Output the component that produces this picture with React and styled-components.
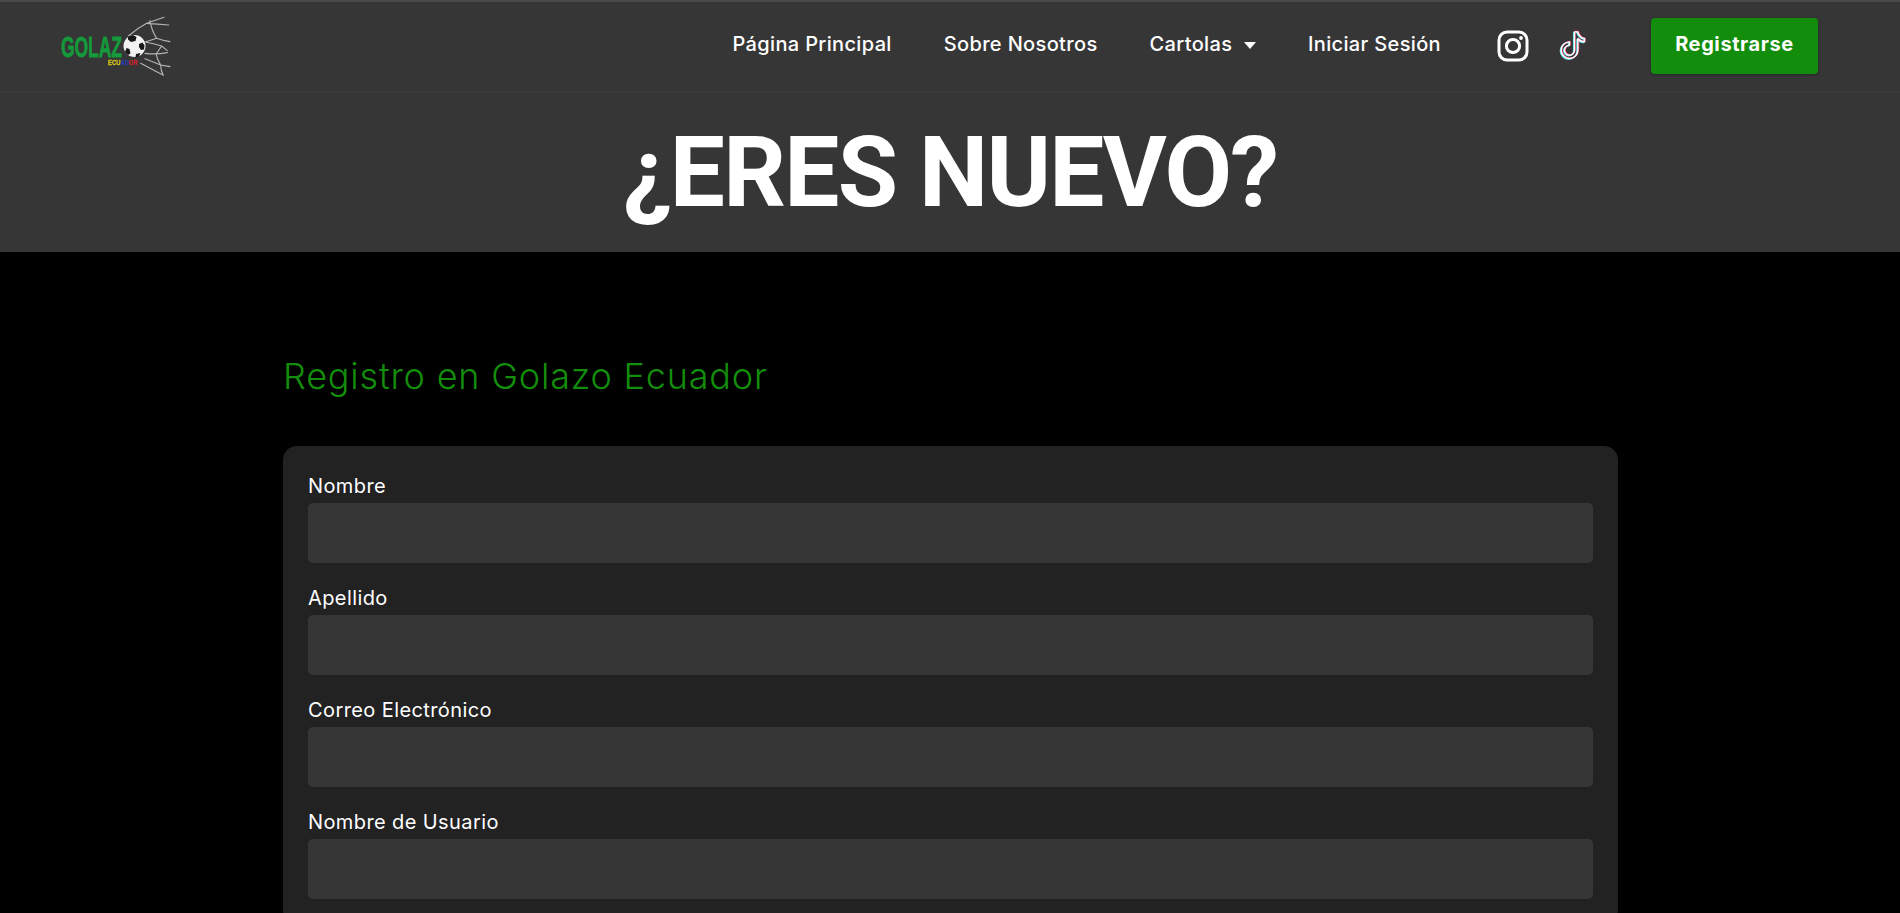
import React from "react";
import styled, { createGlobalStyle } from "styled-components";

const fields = ["Nombre", "Apellido", "Correo Electrónico", "Nombre de Usuario"];
const links = ["Página Principal", "Sobre Nosotros"];

const Logo = () => (
  <LogoSvg width="120" height="72" viewBox="0 0 120 72" fill="none">
    <g transform="translate(-2 -1) scale(0.3333)" stroke="#b4b4b4" strokeWidth="3.4" strokeLinecap="round">
      <path d="M235 78 Q262 55 290 40 L342 22 M290 40 Q322 42 356 45 M300 32 Q304 60 320 85 Q338 92 360 95 M320 85 Q300 92 285 96 M285 96 Q312 100 335 108 L352 122 M335 108 Q326 122 318 132 M285 130 Q318 134 352 128 M318 132 Q322 150 332 165 L360 170 M285 146 Q306 154 332 165 M332 165 Q332 182 340 196 M272 160 Q306 178 340 196" />
    </g>
    <circle cx="82.500" cy="35" r="11" fill="#f2f2f2" />
    <path d="M76 25.500l5-1.500 3.500 2-1 4-4.500 1-3-2.500zM87 33l3.500-1.500 2 3-.5 4-3 .5-2-3zM74.500 37l3 1 1 4.500-2.500 1.500-3-3zM84 43l4.500-1-1.500 3.500-3.500 1z" fill="#191919" />
    <LogoWord x="9" y="46" fontSize="29" fill="#169a3c" stroke="#169a3c" strokeWidth="0.9" textLength="61" lengthAdjust="spacingAndGlyphs">
      GOLAZ
    </LogoWord>
    <LogoWord x="56" y="54" fontSize="8" strokeWidth="0.3" textLength="30" lengthAdjust="spacingAndGlyphs">
      <tspan fill="#d8c81c" stroke="#d8c81c">ECU</tspan>
      <tspan fill="#2a3cb0" stroke="#2a3cb0">AD</tspan>
      <tspan fill="#cf2530" stroke="#cf2530">OR</tspan>
    </LogoWord>
  </LogoSvg>
);

const Instagram = () => (
  <svg width="32" height="32" viewBox="0 0 32 32" fill="none" stroke="#fff">
    <rect x="2" y="2" width="28" height="28" rx="8" strokeWidth="3" />
    <circle cx="16" cy="16" r="6.600" strokeWidth="3" />
    <circle cx="24" cy="8" r="1.900" fill="#fff" stroke="none" />
  </svg>
);

const tiktokPath =
  "M9 0h1.980c.144.715.540 1.617 1.235 2.512C12.895 3.389 13.797 4 15 4v2c-1.753 0-3.070-.814-4-1.829V11a5 5 0 1 1-5-5v2a3 3 0 1 0 3 3V0Z";

const Tiktok = () => (
  <svg width="30" height="32" viewBox="-1.500 -1 18 19" strokeWidth="0.850" strokeLinejoin="round" fill="none">
    <path d={tiktokPath} stroke="#62e6ee" transform="translate(-0.500 0.400)" />
    <path d={tiktokPath} stroke="#f0446a" transform="translate(0.350 -0.200)" />
    <path d={tiktokPath} stroke="#fff" />
  </svg>
);

export default function App() {
  return (
    <>
      <GlobalStyle />
      <Page>
        <TopBand>
          <Navbar>
            <Logo />
            <NavLinks>
              {links.map((l) => (
                <NavLink key={l}>{l}</NavLink>
              ))}
              <NavLink>
                Cartolas <Caret />
              </NavLink>
              <NavLink>Iniciar Sesión</NavLink>
              <Socials>
                <Instagram />
                <Tiktok />
              </Socials>
              <RegisterButton>Registrarse</RegisterButton>
            </NavLinks>
          </Navbar>
          <Hero>
            <HeroTitle>¿ERES NUEVO?</HeroTitle>
          </Hero>
        </TopBand>
        <Main>
          <SectionTitle>Registro en Golazo Ecuador</SectionTitle>
          <Card>
            {fields.map((f) => (
              <Field key={f}>
                <Label>{f}</Label>
                <Input aria-label={f} />
              </Field>
            ))}
          </Card>
        </Main>
      </Page>
    </>
  );
}

const GlobalStyle = createGlobalStyle`
  html, body {
    margin: 0;
    background: #000;
    font-family: "Inter", "Liberation Sans", sans-serif;
  }
`;

const Page = styled.div`
  height: 913px;
  overflow: hidden;
  background: #000;
`;

const TopBand = styled.div`
  background: #363636;
  border-top: 2px solid #4a4a4a;
`;

const Navbar = styled.nav`
  height: 90px;
  padding: 0 82px 0 52px;
  display: flex;
  align-items: center;
  justify-content: space-between;
  border-bottom: 1px solid #3c3c3c;
`;

const LogoSvg = styled.svg`
  filter: blur(0.4px);
`;

const LogoWord = styled.text`
  font-family: "Liberation Sans", sans-serif;
  font-weight: 700;
`;

const NavLinks = styled.div`
  display: flex;
  align-items: center;
  gap: 52px;
  margin-bottom: 2px;
`;

const NavLink = styled.a`
  padding-bottom: 4px;
  color: #fff;
  font-size: 20px;
  font-weight: 500;
  letter-spacing: 0.35px;
  white-space: nowrap;
`;

const Caret = styled.span`
  display: inline-block;
  margin-left: 6px;
  vertical-align: middle;
  border-left: 6.5px solid transparent;
  border-right: 6.5px solid transparent;
  border-top: 7px solid #fff;
`;

const Socials = styled.div`
  display: flex;
  align-items: center;
  gap: 28px;
  margin-left: 4px;
`;

const RegisterButton = styled.button`
  width: 167px;
  height: 56px;
  margin-left: 12px;
  padding: 0 0 4px;
  border: 0;
  border-radius: 4px;
  background: #138e0c;
  color: #fff;
  font-family: inherit;
  font-size: 20px;
  font-weight: 700;
  letter-spacing: 0.6px;
  box-shadow: 0 1px 3px rgba(0, 0, 0, 0.3);
`;

const Hero = styled.header`
  height: 159px;
  display: flex;
  align-items: center;
  justify-content: center;
`;

const HeroTitle = styled.h1`
  margin: 0;
  color: #fff;
  font-family: "Roboto", "Liberation Sans", sans-serif;
  font-size: 98px;
  font-weight: 700;
  letter-spacing: -1.7px;
  line-height: 1;
  white-space: nowrap;
`;

const Main = styled.main`
  padding: 0 282px 0 283px;
`;

const SectionTitle = styled.h2`
  margin: 0;
  padding: 102px 0 48px;
  color: #138e0c;
  font-size: 36px;
  font-weight: 350;
  letter-spacing: 0.8px;
  line-height: 44px;
`;

const Card = styled.section`
  background: #222;
  border-radius: 14px;
  padding: 25px;
  display: flex;
  flex-direction: column;
  gap: 20px;
`;

const Field = styled.div`
  display: flex;
  flex-direction: column;
  gap: 2px;
`;

const Label = styled.label`
  color: #fff;
  font-size: 20px;
  letter-spacing: 0.4px;
  line-height: 30px;
`;

const Input = styled.input`
  height: 60px;
  box-sizing: border-box;
  border: 0;
  border-radius: 5px;
  background: #363636;
`;
